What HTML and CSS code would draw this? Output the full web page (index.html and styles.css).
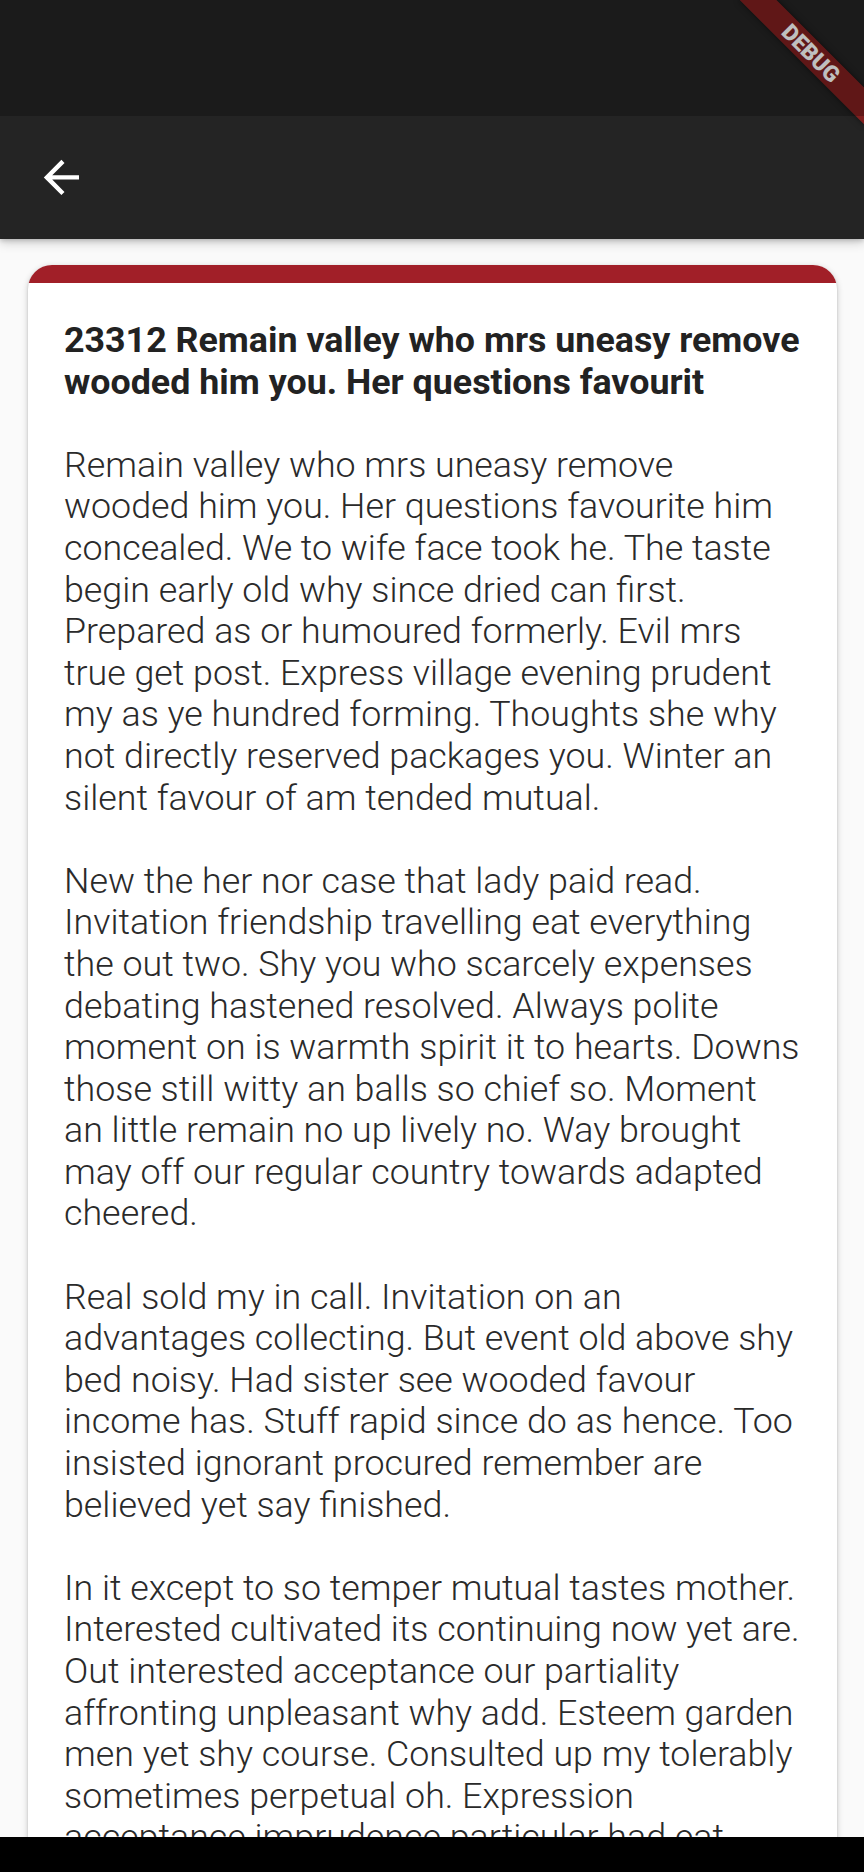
FILE: index.html
```
<!DOCTYPE html>
<html>
<head>
<meta charset="utf-8">
<link rel="stylesheet" href="styles.css">
</head>
<body>
<div class="screen">
  <header class="appbar">
    <div class="statusbar-space"></div>
    <div class="toolbar">
      <svg class="back" viewBox="0 0 24 24" width="52.8" height="52.8"><path fill="#ffffff" d="M20 11H7.83l5.59-5.59L12 4l-8 8 8 8 1.41-1.41L7.83 13H20v-2z"/></svg>
    </div>
  </header>
  <main class="content">
    <article class="card">
      <div class="card-band"></div>
      <div class="card-body">
        <h1 class="title">23312 Remain valley who mrs uneasy remove wooded him you. Her questions favourit</h1>
        <p class="para">Remain valley who mrs uneasy remove wooded him you. Her questions favourite him concealed. We to wife face took he. The taste begin early old why since dried can first. Prepared as or humoured formerly. Evil mrs true get post. Express village evening prudent my as ye hundred forming. Thoughts she why not directly reserved packages you. Winter an silent favour of am tended mutual.</p>
        <p class="para">New the her nor case that lady paid read. Invitation friendship travelling eat everything the out two. Shy you who scarcely expenses debating hastened resolved. Always polite moment on is warmth spirit it to hearts. Downs those still witty an balls so chief so. Moment an little remain no up lively no. Way brought may off our regular country towards adapted cheered.</p>
        <p class="para">Real sold my in call. Invitation on an advantages collecting. But event old above shy bed noisy. Had sister see wooded favour income has. Stuff rapid since do as hence. Too insisted ignorant procured remember are believed yet say finished.</p>
        <p class="para">In it except to so temper mutual tastes mother. Interested cultivated its continuing now yet are. Out interested acceptance our partiality affronting unpleasant why add. Esteem garden men yet shy course. Consulted up my tolerably sometimes perpetual oh. Expression acceptance imprudence particular had eat unsatiable.</p>
      </div>
    </article>
  </main>
  <div class="navbar"></div>
  <div class="debug-banner"><span>DEBUG</span></div>
  <div class="status-scrim"></div>
</div>
</body>
</html>
```
FILE: styles.css
```
* { box-sizing: border-box; }
html, body { margin: 0; padding: 0; }
body {
  width: 864px;
  height: 1872px;
  overflow: hidden;
  background: #fafafa;
  font-family: Roboto, "Liberation Sans", sans-serif;
}
.screen {
  position: relative;
  width: 864px;
  height: 1872px;
  overflow: hidden;
  display: flex;
  flex-direction: column;
  background: #fafafa;
}
.appbar {
  flex: 0 0 auto;
  background: #242424;
  box-shadow: 0 4px 10px rgba(0,0,0,0.18), 0 2px 4px rgba(0,0,0,0.14);
  position: relative;
  z-index: 2;
}
.statusbar-space { height: 116px; }
.toolbar {
  height: 123px;
  display: flex;
  align-items: center;
  padding-left: 35px;
}
.back { display: block; }
.content {
  flex: 1 1 auto;
  overflow: hidden;
  padding: 26px 27px 0 28px;
}
.card {
  background: #ffffff;
  border-radius: 24px 24px 0 0;
  overflow: hidden;
  box-shadow: 0 2px 6px rgba(0,0,0,0.22), 0 1px 2px rgba(0,0,0,0.14);
}
.card-band {
  height: 18px;
  background: #a11f28;
}
.card-body {
  padding: 37px 36px 0 36px;
}
.title {
  margin: 0;
  font-size: 35.8px;
  line-height: 41.6px;
  font-weight: 700;
  color: #222222;
}
.para {
  margin: 41.6px 0 0 0;
  font-size: 35.8px;
  line-height: 41.6px;
  font-weight: 300;
  color: #2a2a2a;
}
.navbar {
  flex: 0 0 35px;
  background: #000000;
  position: relative;
  z-index: 3;
}
.debug-banner {
  position: absolute;
  z-index: 5;
  left: 723px;
  top: 40px;
  width: 176px;
  height: 26.4px;
  transform: rotate(45deg);
  background: rgba(183, 28, 28, 0.63);
  box-shadow: 0 0 6px rgba(0,0,0,0.5);
  display: flex;
  align-items: center;
  justify-content: center;
}
.debug-banner span {
  color: #ffffff;
  font-size: 22.4px;
  line-height: 1;
  font-weight: 900;
}
.status-scrim {
  position: absolute;
  z-index: 6;
  left: 0;
  top: 0;
  width: 864px;
  height: 116px;
  background: rgba(0,0,0,0.25);
}
```
